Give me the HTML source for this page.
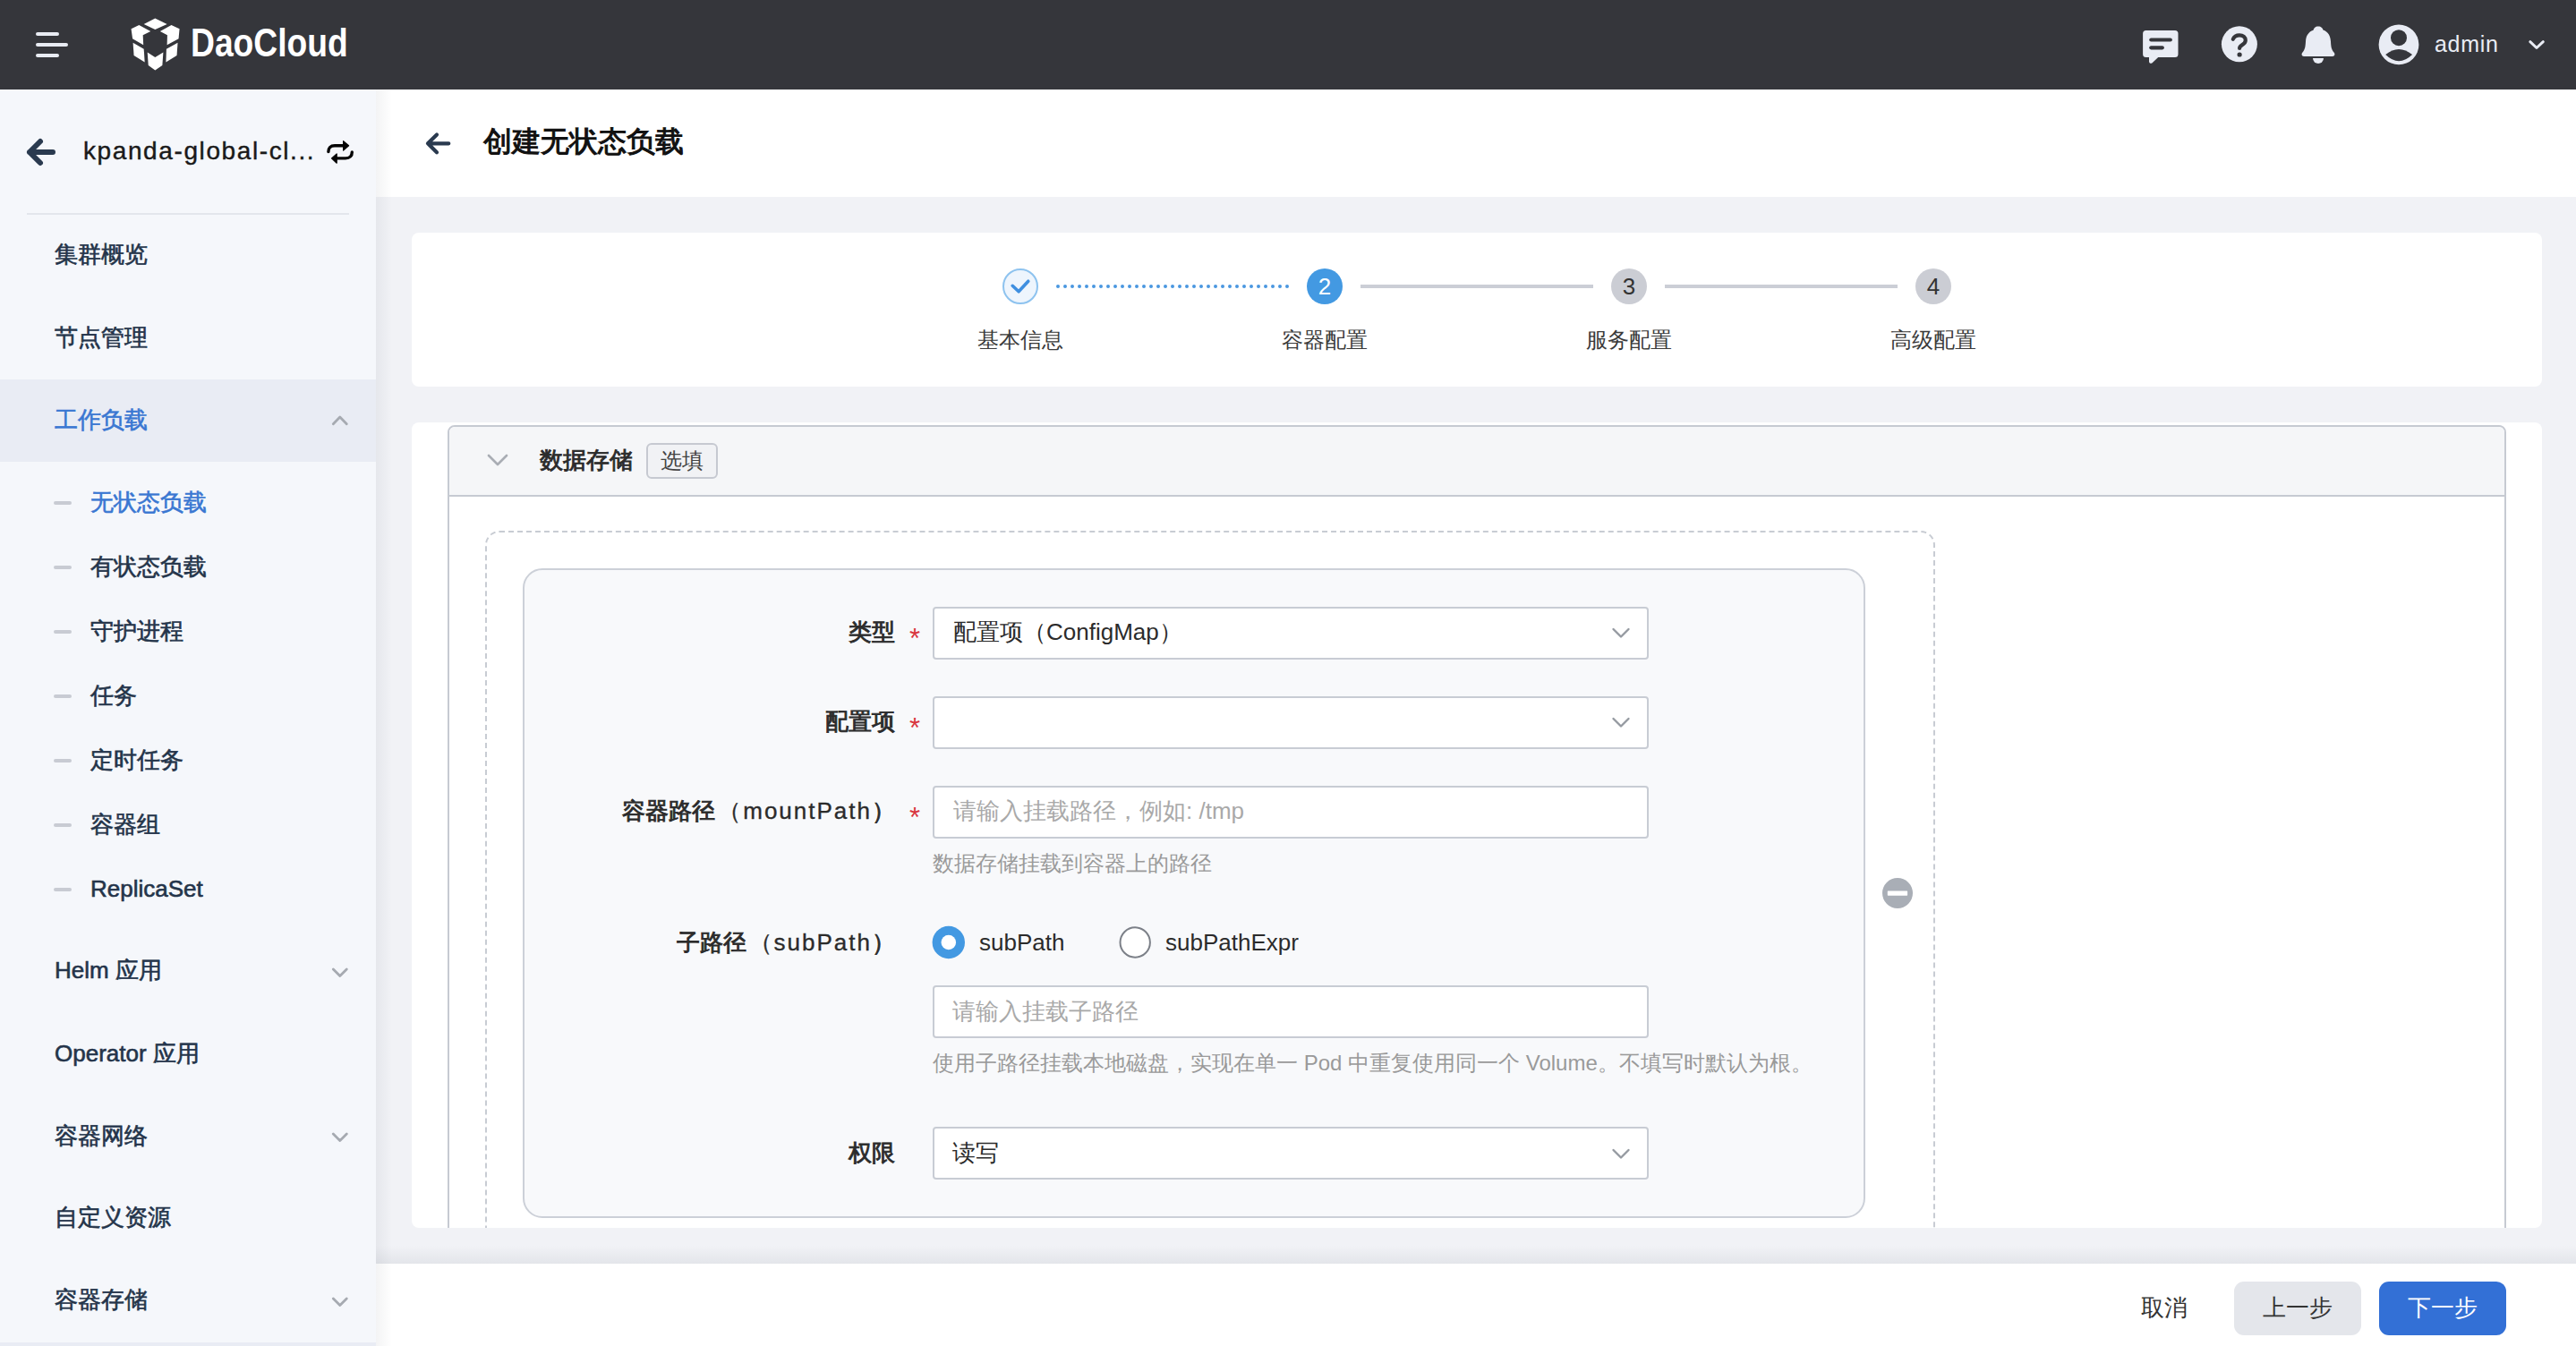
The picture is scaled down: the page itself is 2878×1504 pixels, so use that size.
<!DOCTYPE html>
<html><head><meta charset="utf-8">
<style>
*{box-sizing:border-box;margin:0;padding:0}
html,body{width:2878px;height:1504px;overflow:hidden;background:#f1f2f6;font-family:"Liberation Sans",sans-serif;}
.abs{position:absolute}
.t{position:absolute;white-space:nowrap;line-height:40px;height:40px}
#hdr{left:0;top:0;width:2878px;height:100px;background:#35363b}
#side{left:0;top:100px;width:420px;height:1404px;background:#f5f7fb}
#mainhdr{left:420px;top:100px;width:2458px;height:120px;background:#fff}
.card{background:#fff;border-radius:8px}
.nav{font-size:26px;color:#24344a;left:61px;-webkit-text-stroke:0.6px currentColor}
.sub{font-size:26px;color:#24344a;left:101px;-webkit-text-stroke:0.6px currentColor}
.dash{position:absolute;left:60px;width:20px;height:4px;border-radius:2px;background:#c8cbd3}
.lbl{font-size:26px;color:#2b2b2b;text-align:right;-webkit-text-stroke:0.9px currentColor}
.req{color:#d9363e;font-size:31px}
.lat{-webkit-text-stroke:0.35px currentColor;letter-spacing:2px;color:#2b2b2b;margin-left:3px}
.inp{position:absolute;left:1042px;width:800px;height:59px;background:#fff;border:2px solid #c8ccd4;border-radius:4px}
.ph{font-size:26px;color:#a9a9a9}
.val{font-size:26px;color:#2b2b2b}
.help{font-size:24px;color:#9a9a9a}
</style></head><body>
<!-- header -->
<div id="hdr" class="abs">
  <svg class="abs" style="left:0;top:0" width="420" height="100">
    <g fill="#e9ecf3">
      <rect x="40" y="36" width="26" height="4" rx="2"/>
      <rect x="40" y="48" width="36" height="4" rx="2"/>
      <rect x="40" y="60" width="26" height="4" rx="2"/>
    </g>
    <g fill="#fff" transform="translate(140,15) scale(0.10093)">
      <polygon points="205,118 330,55 462,118 330,178"/>
      <polygon points="65,170 152,130 280,198 195,240 200,350 80,280"/>
      <polygon points="600,170 510,130 385,198 465,240 462,350 590,280"/>
      <polygon points="85,325 205,395 215,540 95,465"/>
      <polygon points="580,325 455,395 450,540 570,465"/>
      <polygon points="245,430 330,485 420,430 410,575 330,630 255,575"/>
    </g>
  </svg>
  <div class="t" style="left:213px;top:23px;height:50px;line-height:50px;font-size:45px;font-weight:700;color:#fff;transform:scaleX(0.827);transform-origin:0 0">DaoCloud</div>
  <svg class="abs" style="left:2380px;top:20px" width="498" height="60">
    <g fill="#e9ecf4">
      <!-- chat -->
      <path d="M17.6 13.9 H50 A3.5 3.5 0 0 1 53.5 17.4 V40.6 A3.5 3.5 0 0 1 50 44.1 H31.2 L24.6 50.2 C23.2 51.5 21 50.8 21 48.8 V44.1 H17.6 A3.5 3.5 0 0 1 14.1 40.6 V17.4 A3.5 3.5 0 0 1 17.6 13.9 Z"/>
      <!-- help -->
      <circle cx="121.9" cy="29.3" r="20"/>
      <!-- bell -->
      <path d="M210 9.6 C206.5 9.6 205.5 11.3 204.5 13.7 C199 15.5 196.3 20 196 26.5 C195.7 31 195.6 35 192.5 38.5 C190.8 40.3 191.5 42.9 194 42.9 H226 C228.5 42.9 229.2 40.3 227.5 38.5 C224.4 35 224.3 31 224 26.5 C223.7 20 221 15.5 215.5 13.5 C214.5 11.3 213.5 9.6 210 9.6 Z"/>
      <path d="M204 44.9 H216 A6 6 0 0 1 204 44.9 Z"/>
      <!-- avatar -->
      <circle cx="300" cy="29.9" r="22.4"/>
    </g>
    <g stroke="#35363b" stroke-width="4.2" stroke-linecap="round" fill="none">
      <line x1="23.3" y1="24.5" x2="44.8" y2="24.5"/>
      <line x1="23.3" y1="33.3" x2="35.8" y2="33.3"/>
      <path d="M114.8 23.8 C116 20.8 118.8 19.3 122 19.3 C126 19.3 128.8 21.8 128.8 25 C128.8 27.8 126.8 29.2 124.8 30.4 C123 31.5 122.1 32.3 122.1 34"/>
    </g>
    <g fill="#35363b">
      <circle cx="122.1" cy="41" r="2.6"/>
      <circle cx="300" cy="22.2" r="9"/>
      <path d="M285.2 41 Q300 29 315.1 41 Q300 55.5 285.2 41 Z"/>
    </g>
    <path d="M446.8 26.7 L454 33.5 L461.3 26.7" stroke="#e9ecf4" stroke-width="3" fill="none" stroke-linecap="round" stroke-linejoin="round"/>
  </svg>
  <div class="t" style="left:2720px;top:29px;font-size:25px;color:#e9ecf4;letter-spacing:0.7px">admin</div>
</div>

<!-- sidebar -->
<div id="side" class="abs">
  <svg class="abs" style="left:0;top:0" width="420" height="1404">
    <path d="M59 70 H33 M45 58 L33 70 L45 82" stroke="#2a3a4f" stroke-width="6" fill="none" stroke-linecap="round" stroke-linejoin="round"/>
    <rect x="30" y="138" width="360" height="2" fill="#e3e6ec"/>
  </svg>
</div>
<div class="t" style="left:93px;top:149px;font-size:28px;color:#1a1a1a;letter-spacing:1.6px;-webkit-text-stroke:0.4px currentColor">kpanda-global-cl...</div>
<svg class="abs" style="left:360px;top:150px" width="40" height="40">
  <g stroke="#050505" stroke-width="3.4" fill="none" stroke-linecap="round">
    <path d="M6.9 19.5 C6.9 15.5 9 12.7 14 12.7 H24.5"/>
    <path d="M33.3 19.9 C33.3 24 31 26.9 26 26.9 H15.5"/>
  </g>
  <g fill="#050505" stroke="#050505" stroke-width="1.2" stroke-linejoin="round">
    <polygon points="23.6,7.6 29.6,12.8 23.6,18.1"/>
    <polygon points="16.2,21.9 10.5,26.9 16.2,32.2"/>
  </g>
</svg>

<div class="abs" style="left:0;top:424px;width:420px;height:92px;background:#e9ecf4"></div>
<div class="t nav" style="top:264px">集群概览</div>
<div class="t nav" style="top:357px">节点管理</div>
<div class="t nav" style="top:449px;color:#3a77d2">工作负载</div>
<svg class="abs" style="left:368px;top:460px" width="24" height="20"><path d="M4.3 13.7 L11.8 6.1 L19.3 13.7" stroke="#a6aab1" stroke-width="2.8" fill="none" stroke-linecap="round" stroke-linejoin="round"/></svg>

<div class="dash" style="top:560px"></div><div class="t sub" style="top:541px;color:#3a77d2">无状态负载</div>
<div class="dash" style="top:632px"></div><div class="t sub" style="top:613px">有状态负载</div>
<div class="dash" style="top:704px"></div><div class="t sub" style="top:685px">守护进程</div>
<div class="dash" style="top:776px"></div><div class="t sub" style="top:757px">任务</div>
<div class="dash" style="top:848px"></div><div class="t sub" style="top:829px">定时任务</div>
<div class="dash" style="top:920px"></div><div class="t sub" style="top:901px">容器组</div>
<div class="dash" style="top:992px"></div><div class="t sub" style="top:973px">ReplicaSet</div>

<div class="t nav" style="top:1064px">Helm 应用</div>
<div class="t nav" style="top:1157px">Operator 应用</div>
<div class="t nav" style="top:1249px">容器网络</div>
<div class="t nav" style="top:1340px">自定义资源</div>
<div class="t nav" style="top:1432px">容器存储</div>
<svg class="abs" style="left:368px;top:1077px" width="24" height="20"><path d="M4.3 6 L11.8 13.6 L19.3 6" stroke="#a6aab1" stroke-width="2.8" fill="none" stroke-linecap="round" stroke-linejoin="round"/></svg>
<svg class="abs" style="left:368px;top:1261px" width="24" height="20"><path d="M4.3 6 L11.8 13.6 L19.3 6" stroke="#a6aab1" stroke-width="2.8" fill="none" stroke-linecap="round" stroke-linejoin="round"/></svg>
<svg class="abs" style="left:368px;top:1445px" width="24" height="20"><path d="M4.3 6 L11.8 13.6 L19.3 6" stroke="#a6aab1" stroke-width="2.8" fill="none" stroke-linecap="round" stroke-linejoin="round"/></svg>
<div class="abs" style="left:0;top:1500px;width:420px;height:4px;background:#e9ecf4"></div>

<!-- main header -->
<div id="mainhdr" class="abs"></div>
<svg class="abs" style="left:470px;top:140px" width="40" height="40">
  <path d="M31.3 20.3 H8 M18 10.4 L8 20.3 L18 30.2" stroke="#2a3a4f" stroke-width="4.2" fill="none" stroke-linecap="round" stroke-linejoin="round"/>
</svg>
<div class="t" style="left:540px;top:138px;font-size:32px;color:#111;-webkit-text-stroke:1.1px currentColor">创建无状态负载</div>

<!-- steps card -->
<div class="abs card" style="left:460px;top:260px;width:2380px;height:172px"></div>
<svg class="abs" style="left:1100px;top:290px" width="1100" height="60">
  <circle cx="40" cy="30" r="19" fill="#eef5fd" stroke="#8ec3ef" stroke-width="2"/>
  <path d="M31.2 29.3 L38.1 35.8 L48.8 24.2" stroke="#3f8fe0" stroke-width="3.6" fill="none" stroke-linecap="round" stroke-linejoin="round"/>
  <line x1="82" y1="30" x2="340" y2="30" stroke="#4a97e0" stroke-width="4" stroke-linecap="round" stroke-dasharray="0 8"/>
  <circle cx="380" cy="30" r="20" fill="#4399e2"/>
  <line x1="420" y1="30" x2="680" y2="30" stroke="#cbced6" stroke-width="4"/>
  <circle cx="720" cy="30" r="20" fill="#cbcdd4"/>
  <line x1="760" y1="30" x2="1020" y2="30" stroke="#cbced6" stroke-width="4"/>
  <circle cx="1060" cy="30" r="20" fill="#cbcdd4"/>
</svg>
<div class="t" style="left:1460px;top:300px;width:40px;text-align:center;font-size:26px;color:#fff">2</div>
<div class="t" style="left:1800px;top:300px;width:40px;text-align:center;font-size:26px;color:#333">3</div>
<div class="t" style="left:2140px;top:300px;width:40px;text-align:center;font-size:26px;color:#333">4</div>
<div class="t" style="left:1040px;top:360px;width:200px;text-align:center;font-size:24px;color:#3a3a3a">基本信息</div>
<div class="t" style="left:1380px;top:360px;width:200px;text-align:center;font-size:24px;color:#3a3a3a">容器配置</div>
<div class="t" style="left:1720px;top:360px;width:200px;text-align:center;font-size:24px;color:#3a3a3a">服务配置</div>
<div class="t" style="left:2060px;top:360px;width:200px;text-align:center;font-size:24px;color:#3a3a3a">高级配置</div>

<!-- form card -->
<div class="abs card" style="left:460px;top:472px;width:2380px;height:900px;border-bottom-left-radius:8px;border-bottom-right-radius:8px"></div>
<div class="abs" style="left:500px;top:475px;width:2300px;height:920px;border:2px solid #c6cad2;border-radius:8px 8px 0 0;overflow:hidden">
  <div class="abs" style="left:0;top:0;width:2300px;height:78px;background:#f5f6f8;border-bottom:2px solid #c6cad2"></div>
</div>
<!-- mask bottom beyond card -->
<svg class="abs" style="left:536px;top:498px" width="40" height="36"><path d="M10 11 L20 21 L30 11" stroke="#a9adb4" stroke-width="2.6" fill="none" stroke-linecap="round" stroke-linejoin="round"/></svg>
<div class="t" style="left:603px;top:494px;font-size:26px;color:#2b2b2b;-webkit-text-stroke:0.9px currentColor">数据存储</div>
<div class="abs" style="left:722px;top:495px;width:80px;height:40px;border:2px solid #c6c9d1;border-radius:6px;background:#f1f2f5"></div>
<div class="t" style="left:722px;top:495px;width:80px;text-align:center;font-size:24px;color:#444">选填</div>

<!-- dashed box -->
<div class="abs" style="left:542px;top:593px;width:1620px;height:820px;border:2px dashed #c8ccd3;border-radius:16px"></div>
<!-- inner card -->
<div class="abs" style="left:584px;top:635px;width:1500px;height:726px;border:2px solid #ccd0d8;border-radius:22px;background:#f8f9fb"></div>

<div class="t lbl" style="left:700px;top:686px;width:300px">类型</div>
<div class="t req" style="left:1016px;top:694px">*</div>
<div class="inp" style="top:678px"></div>
<div class="t val" style="left:1065px;top:686px">配置项（ConfigMap）</div>
<svg class="abs" style="left:1798px;top:696px" width="26" height="24"><path d="M4.5 7 L13 15.5 L21.5 7" stroke="#959aa1" stroke-width="2.4" fill="none" stroke-linecap="round" stroke-linejoin="round"/></svg>

<div class="t lbl" style="left:700px;top:786px;width:300px">配置项</div>
<div class="t req" style="left:1016px;top:794px">*</div>
<div class="inp" style="top:778px"></div>
<svg class="abs" style="left:1798px;top:796px" width="26" height="24"><path d="M4.5 7 L13 15.5 L21.5 7" stroke="#959aa1" stroke-width="2.4" fill="none" stroke-linecap="round" stroke-linejoin="round"/></svg>

<div class="t lbl" style="left:600px;top:886px;width:400px">容器路径<span class="lat">（mountPath</span>）</div>
<div class="t req" style="left:1016px;top:894px">*</div>
<div class="inp" style="top:878px"></div>
<div class="t ph" style="left:1065px;top:886px">请输入挂载路径，例如: /tmp</div>
<div class="t help" style="left:1042px;top:945px">数据存储挂载到容器上的路径</div>

<div class="t lbl" style="left:600px;top:1033px;width:400px">子路径<span class="lat">（subPath</span>）</div>
<svg class="abs" style="left:1040px;top:1033px" width="250" height="40">
  <circle cx="19.8" cy="20" r="18.2" fill="#4399e2"/>
  <circle cx="19.8" cy="20" r="8.3" fill="#fff"/>
  <circle cx="228.2" cy="20" r="16.7" fill="#fff" stroke="#7c8088" stroke-width="2"/>
</svg>
<div class="t val" style="left:1094px;top:1033px">subPath</div>
<div class="t val" style="left:1302px;top:1033px">subPathExpr</div>
<div class="inp" style="top:1101px"></div>
<div class="t ph" style="left:1064px;top:1110px">请输入挂载子路径</div>
<div class="t help" style="left:1042px;top:1168px">使用子路径挂载本地磁盘，实现在单一 Pod 中重复使用同一个 Volume。不填写时默认为根。</div>

<div class="t lbl" style="left:700px;top:1268px;width:300px">权限</div>
<div class="inp" style="top:1259px"></div>
<div class="t val" style="left:1064px;top:1268px">读写</div>
<svg class="abs" style="left:1798px;top:1278px" width="26" height="24"><path d="M4.5 7 L13 15.5 L21.5 7" stroke="#959aa1" stroke-width="2.4" fill="none" stroke-linecap="round" stroke-linejoin="round"/></svg>

<!-- remove icon -->
<svg class="abs" style="left:2100px;top:978px" width="40" height="40">
  <circle cx="20" cy="20" r="17" fill="#a9aeb6"/>
  <rect x="8.8" y="17.4" width="22.3" height="5.3" rx="0.6" fill="#fff"/>
</svg>

<!-- grey band below card (covers overflow) -->
<div class="abs" style="left:420px;top:1372px;width:2458px;height:40px;background:#f1f2f6"></div>
<div class="abs" style="left:420px;top:1392px;width:2458px;height:20px;background:linear-gradient(#f1f2f6,#e3e5ea)"></div>
<!-- footer -->
<div class="abs" style="left:420px;top:1412px;width:2458px;height:92px;background:#fff"></div>
<div class="t" style="left:2392px;top:1441px;font-size:26px;color:#333">取消</div>
<div class="abs" style="left:2496px;top:1432px;width:142px;height:60px;background:#e4e6eb;border-radius:11px"></div>
<div class="t" style="left:2496px;top:1441px;width:142px;text-align:center;font-size:26px;color:#333">上一步</div>
<div class="abs" style="left:2658px;top:1432px;width:142px;height:60px;background:#3370d6;border-radius:11px"></div>
<div class="t" style="left:2658px;top:1441px;width:142px;text-align:center;font-size:26px;color:#fff">下一步</div>
<div class="abs" style="left:420px;top:100px;width:18px;height:1404px;background:linear-gradient(to right,rgba(20,30,50,0.05),rgba(20,30,50,0))"></div>
</body></html>
